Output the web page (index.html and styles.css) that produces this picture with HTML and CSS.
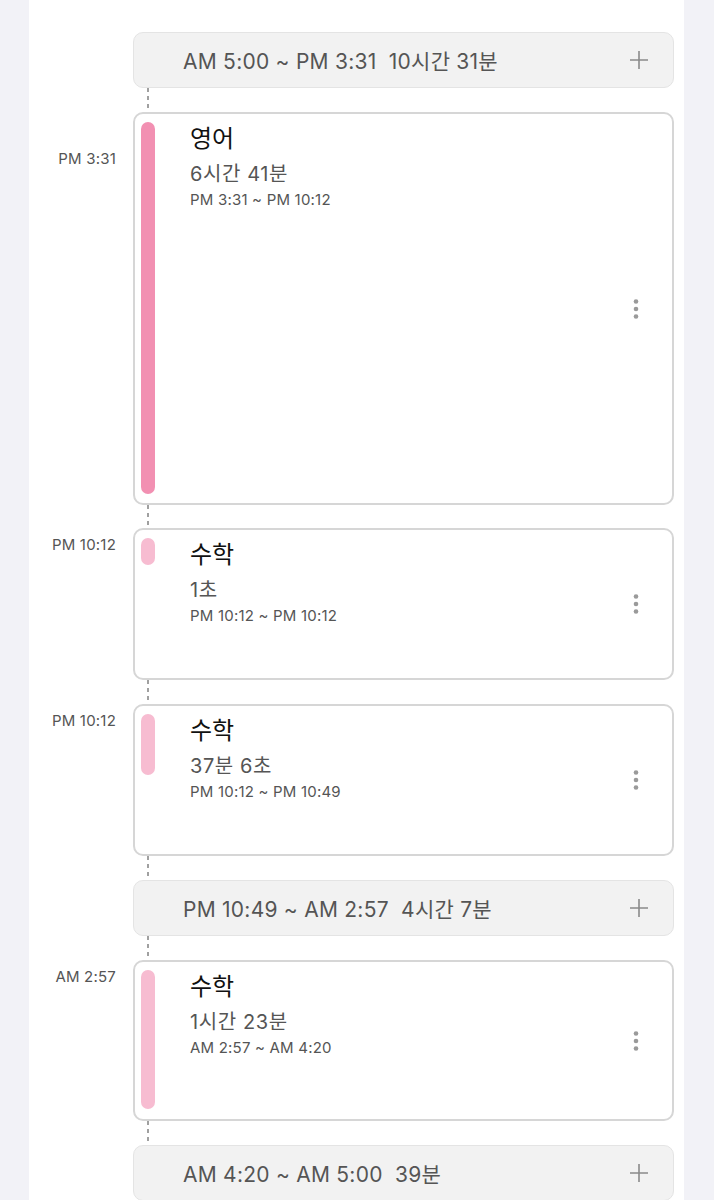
FILE: index.html
```html
<!DOCTYPE html>
<html lang="ko">
<head>
    <meta charset="UTF-8">
    <meta name="viewport" content="width=device-width, initial-scale=1.0">
    <title>타임라인</title>
    <link rel="stylesheet" href="styles.css">
</head>
<body>
    <div class="panel">
        <div class="timeline">
            <div class="time"></div>
            <div class="gap">
                <span class="gap-text">AM 5:00 ~ PM 3:31&nbsp; 10시간 31분</span>
                <svg class="plus" viewBox="0 0 18 18"><path d="M9 0v18M0 9h18"/></svg>
            </div>

            <div class="time"></div>
            <div class="link"></div>

            <div class="time time-late">PM 3:31</div>
            <div class="card" style="height: 393px">
                <div class="bar bar-strong" style="height: 372px"></div>
                <div class="info">
                    <div class="title">영어</div>
                    <div class="dur">6시간 41분</div>
                    <div class="range">PM 3:31 ~ PM 10:12</div>
                </div>
                <svg class="more" viewBox="0 0 24 20"><circle cx="12" cy="2.5" r="2.3"/><circle cx="12" cy="10" r="2.3"/><circle cx="12" cy="17.5" r="2.3"/></svg>
            </div>

            <div class="time"></div>
            <div class="link link-short"></div>

            <div class="time">PM 10:12</div>
            <div class="card" style="height: 152px">
                <div class="bar" style="height: 27px"></div>
                <div class="info">
                    <div class="title">수학</div>
                    <div class="dur">1초</div>
                    <div class="range">PM 10:12 ~ PM 10:12</div>
                </div>
                <svg class="more" viewBox="0 0 24 20"><circle cx="12" cy="2.5" r="2.3"/><circle cx="12" cy="10" r="2.3"/><circle cx="12" cy="17.5" r="2.3"/></svg>
            </div>

            <div class="time"></div>
            <div class="link"></div>

            <div class="time">PM 10:12</div>
            <div class="card" style="height: 152px">
                <div class="bar" style="height: 61px"></div>
                <div class="info">
                    <div class="title">수학</div>
                    <div class="dur">37분 6초</div>
                    <div class="range">PM 10:12 ~ PM 10:49</div>
                </div>
                <svg class="more" viewBox="0 0 24 20"><circle cx="12" cy="2.5" r="2.3"/><circle cx="12" cy="10" r="2.3"/><circle cx="12" cy="17.5" r="2.3"/></svg>
            </div>

            <div class="time"></div>
            <div class="link"></div>

            <div class="time"></div>
            <div class="gap">
                <span class="gap-text">PM 10:49 ~ AM 2:57&nbsp; 4시간 7분</span>
                <svg class="plus" viewBox="0 0 18 18"><path d="M9 0v18M0 9h18"/></svg>
            </div>

            <div class="time"></div>
            <div class="link"></div>

            <div class="time">AM 2:57</div>
            <div class="card" style="height: 161px">
                <div class="bar" style="height: 139px"></div>
                <div class="info">
                    <div class="title">수학</div>
                    <div class="dur">1시간 23분</div>
                    <div class="range">AM 2:57 ~ AM 4:20</div>
                </div>
                <svg class="more" viewBox="0 0 24 20"><circle cx="12" cy="2.5" r="2.3"/><circle cx="12" cy="10" r="2.3"/><circle cx="12" cy="17.5" r="2.3"/></svg>
            </div>

            <div class="time"></div>
            <div class="link"></div>

            <div class="time"></div>
            <div class="gap">
                <span class="gap-text">AM 4:20 ~ AM 5:00&nbsp; 39분</span>
                <svg class="plus" viewBox="0 0 18 18"><path d="M9 0v18M0 9h18"/></svg>
            </div>
        </div>
    </div>
</body>
</html>
```

FILE: styles.css
```css
body {
    margin: 0;
    background-color: #f2f2f7;
    font-family: Inter, "Noto Sans CJK KR", sans-serif;
}
.panel {
    margin: 0 30px 0 29px;
    min-height: 1200px;
    background-color: #fff;
    padding-top: 32px;
    box-sizing: border-box;
}
.timeline {
    display: grid;
    grid-template-columns: 104px 1fr;
    padding-right: 10px;
}
.time {
    padding: 8px 17px 0 0;
    text-align: right;
    font-size: 15px;
    line-height: 18px;
    letter-spacing: 0.2px;
    color: #555;
}
.time-late {
    padding-top: 38px;
}
.link {
    height: 24px;
    margin-left: 14px;
    width: 1.5px;
    background: repeating-linear-gradient(to bottom, #a0a0a0 0 4px, transparent 4px 8px);
}
.link-short {
    height: 23px;
}
.gap {
    height: 56px;
    box-sizing: border-box;
    display: flex;
    align-items: center;
    padding: 0 25px 0 49px;
    background-color: #f2f2f2;
    border: 1px solid #e4e4e4;
    border-radius: 10px;
}
.gap-text {
    font-size: 21px;
    letter-spacing: 0.25px;
    color: #555;
    white-space: pre;
}
.plus {
    margin-left: auto;
    width: 18px;
    height: 18px;
    stroke: #8a8a8a;
    stroke-width: 1.6;
    fill: none;
}
.card {
    box-sizing: border-box;
    display: flex;
    align-items: flex-start;
    padding: 8px 6px;
    border: 2px solid #d6d6d6;
    border-radius: 10px;
}
.bar {
    flex: none;
    width: 14px;
    border-radius: 7px;
    background-color: #f7bcd1;
}
.bar-strong {
    background-color: #f290b2;
}
.info {
    margin-left: 35px;
    padding-top: 1px;
}
.title {
    font-size: 24px;
    line-height: 32px;
    color: #111;
}
.dur {
    margin-top: 5px;
    font-size: 20px;
    line-height: 28px;
    letter-spacing: 0.6px;
    color: #555;
}
.range {
    margin-top: 3px;
    font-size: 15px;
    line-height: 18px;
    letter-spacing: 0.2px;
    color: #555;
}
.more {
    align-self: center;
    margin: 0 18px 0 auto;
    width: 24px;
    height: 20px;
    fill: #9a9a9a;
}
```
